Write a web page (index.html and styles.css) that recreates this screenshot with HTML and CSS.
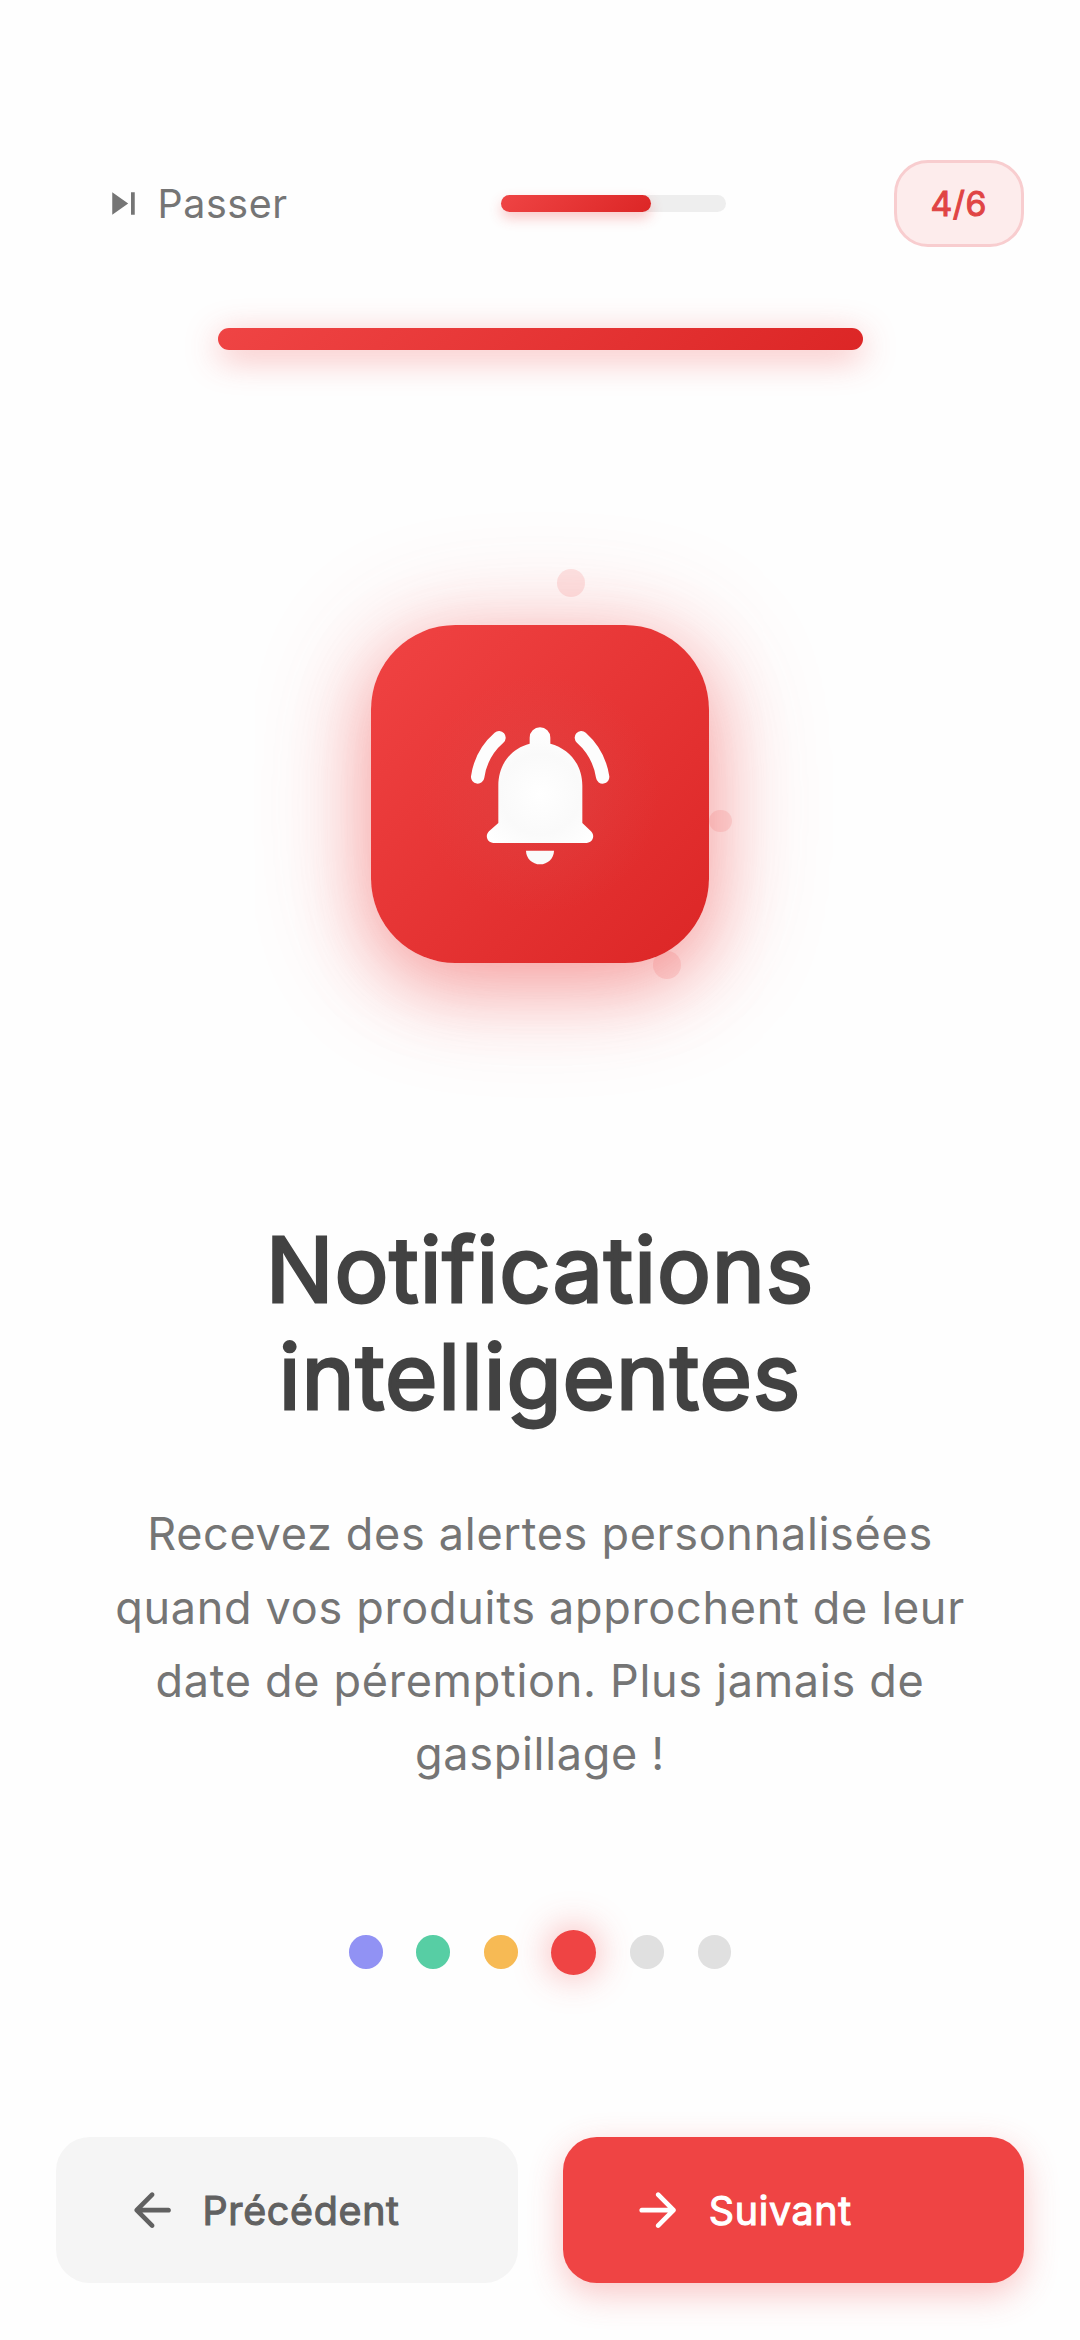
FILE: index.html
```html
<!DOCTYPE html>
<html lang="fr">
<head>
<meta charset="utf-8">
<title>Notifications intelligentes</title>
<link rel="stylesheet" href="styles.css">
</head>
<body>
<main class="screen">
  <header class="topbar">
    <button class="skip">
      <svg class="skip-icon" viewBox="0 0 24 24"><path d="M6 18l8.5-6L6 6v12zM16 6v12h2V6h-2z"/></svg>
      <span>Passer</span>
    </button>
    <div class="progress"><div class="progress-fill"></div></div>
    <div class="counter">4/6</div>
  </header>

  <div class="accent"></div>

  <section class="hero">
    <div class="tile-wrap">
      <span class="spark spark-top"></span>
      <span class="spark spark-right"></span>
      <span class="spark spark-bottom"></span>
      <div class="tile">
        <svg class="bell" viewBox="0 10 600 600">
          <defs>
            <radialGradient id="shade" gradientUnits="userSpaceOnUse" cx="300" cy="310" r="200">
              <stop offset="0" stop-color="#fff"/>
              <stop offset=".6" stop-color="#fafafa"/>
              <stop offset="1" stop-color="#fff"/>
            </radialGradient>
          </defs>
          <path fill="url(#shade)" d="M269 159V141a31 31 0 0 1 62 0V159C388 174 427 222 427 285V397L453 422C467 436 457 457 439 457H161C143 457 133 436 147 422L175 397V285C175 222 212 174 269 159Z"/>
          <path fill="#fafafa" d="M258 480H342C342 503 323 521 300 521S258 503 258 480Z"/>
          <path class="wave" d="M177 141Q123 188 113 259M424 141Q477 188 488 259"/>
        </svg>
      </div>
    </div>
  </section>

  <h1 class="title">Notifications<br>intelligentes</h1>
  <p class="copy">Recevez des alertes personnalisées<br>quand vos produits approchent de leur<br>date de péremption. Plus jamais de<br>gaspillage !</p>

  <div class="dots">
    <span class="dot dot-indigo"></span>
    <span class="dot dot-green"></span>
    <span class="dot dot-amber"></span>
    <span class="dot dot-active"></span>
    <span class="dot"></span>
    <span class="dot"></span>
  </div>

  <footer class="actions">
    <button class="btn btn-prev">
      <svg class="arrow" viewBox="0 0 24 24"><path d="M19 11H7.83l4.88-4.88c.39-.39.39-1.03 0-1.42-.39-.39-1.02-.39-1.41 0l-6.59 6.59c-.39.39-.39 1.02 0 1.41l6.59 6.59c.39.39 1.02.39 1.41 0 .39-.39.39-1.02 0-1.41L7.83 13H19c.55 0 1-.45 1-1s-.45-1-1-1z"/></svg>
      <span>Précédent</span>
    </button>
    <button class="btn btn-next">
      <svg class="arrow" viewBox="0 0 24 24"><path d="M5 13h11.17l-4.88 4.88c-.39.39-.39 1.03 0 1.42.39.39 1.02.39 1.41 0l6.59-6.59c.39-.39.39-1.02 0-1.41l-6.58-6.6c-.39-.39-1.02-.39-1.41 0-.39.39-.39 1.02 0 1.41L16.17 11H5c-.55 0-1 .45-1 1s.45 1 1 1z"/></svg>
      <span>Suivant</span>
    </button>
  </footer>
</main>
</body>
</html>
```
FILE: styles.css
```css
* { box-sizing: border-box; }

body {
  margin: 0;
  background: #fefefe;
  font-family: Inter, Roboto, sans-serif;
}

button {
  border: 0;
  padding: 0;
  background: none;
  font: inherit;
  text-align: left;
}

.screen {
  display: flex;
  flex-direction: column;
  width: 1080px;
  height: 2340px;
  padding: 160px 56.25px 0;
  overflow: hidden;
}

.topbar {
  display: flex;
  align-items: center;
  justify-content: space-between;
  height: 87px;
}

.skip {
  display: flex;
  align-items: center;
  gap: 11.25px;
  width: 276px;
  padding-left: 45px;
  color: #757575;
  font-size: 39.375px;
  line-height: 56px;
  letter-spacing: 0.6px;
}

.skip-icon {
  width: 45px;
  height: 45px;
  fill: #757575;
}

.progress {
  width: 225px;
  height: 17px;
  border-radius: 9px;
  background: #eee;
}

.progress-fill {
  width: 150px;
  height: 100%;
  border-radius: 9px;
  background: linear-gradient(135deg, #ef4444, #dc2626);
  box-shadow: 0 6px 13px rgba(239, 68, 68, 0.3);
}

.counter {
  display: flex;
  align-items: center;
  justify-content: center;
  width: 130px;
  height: 87px;
  border: 3px solid #f8cdcf;
  border-radius: 34px;
  background: #fdecec;
  color: #e04444;
  font-size: 33.75px;
  letter-spacing: 0.5px;
  -webkit-text-stroke: 1px;
}

.accent {
  flex: none;
  align-self: center;
  width: 645px;
  height: 22.5px;
  margin-top: 80.5px;
  border-radius: 11.25px;
  background: linear-gradient(135deg, #ef4444, #dc2626);
  box-shadow: 0 8px 34px rgba(239, 68, 68, 0.4);
}

.hero {
  flex: none;
  display: flex;
  justify-content: center;
  margin-top: 275px;
}

.tile-wrap {
  position: relative;
  width: 337.5px;
  height: 337.5px;
  border-radius: 84.4px;
  box-shadow:
    0 22.5px 72px rgba(239, 68, 68, 0.4),
    0 11px 120px 4px rgba(239, 68, 68, 0.24);
}

.tile {
  position: relative;
  display: flex;
  align-items: center;
  justify-content: center;
  width: 100%;
  height: 100%;
  border-radius: 84.4px;
  background:
    radial-gradient(circle, rgba(215, 85, 85, 0.3), rgba(215, 85, 85, 0) 50%),
    linear-gradient(135deg, #f04343, #dc2626);
}

.bell { width: 200px; height: 200px; }

.wave {
  fill: none;
  stroke: #fdfdfd;
  stroke-width: 40;
  stroke-linecap: round;
}

.spark {
  position: absolute;
  width: 28px;
  height: 28px;
  border-radius: 50%;
  background: rgba(239, 68, 68, 0.14);
}

.spark-top { left: 186px; top: -56px; }
.spark-right { left: 338px; top: 184.5px; width: 22.5px; height: 22.5px; }
.spark-bottom { left: 281.5px; top: 326px; }

.title {
  flex: none;
  margin: 253px 0 0;
  color: #424242;
  font-size: 90px;
  font-weight: 400;
  line-height: 107.3px;
  letter-spacing: 0.9px;
  text-align: center;
  -webkit-text-stroke: 2.8px;
}

.copy {
  flex: none;
  margin: 67px 0 0;
  color: #757575;
  font-size: 45px;
  line-height: 73.4px;
  letter-spacing: 0.7px;
  text-align: center;
}

.dots {
  flex: none;
  display: flex;
  align-items: center;
  justify-content: center;
  gap: 33.75px;
  height: 45px;
  margin-top: 139px;
}

.dot {
  width: 33.75px;
  height: 33.75px;
  border-radius: 50%;
  background: #e0e0e0;
}

.dot-indigo { background: #9192f4; }
.dot-green { background: #57cea4; }
.dot-amber { background: #f7ba54; }

.dot-active {
  width: 45px;
  height: 45px;
  background: #ef4444;
  box-shadow: 0 0 36px 2px rgba(239, 68, 68, 0.4);
}

.actions {
  flex: none;
  display: flex;
  gap: 45px;
  margin-top: 162.5px;
}

.btn {
  display: flex;
  flex: 1;
  align-items: center;
  gap: 22.5px;
  height: 146.25px;
  padding-left: 67.5px;
  border-radius: 33.75px;
  font-size: 39.375px;
  letter-spacing: 0.7px;
  -webkit-text-stroke: 1.1px;
}

.btn-prev { background: #f5f5f5; color: #616161; }

.btn-next {
  background: #ef4444;
  color: #fff;
  box-shadow: 0 11px 34px rgba(239, 68, 68, 0.3);
}

.arrow {
  width: 56.25px;
  height: 56.25px;
  fill: currentColor;
  stroke: none;
}
```
